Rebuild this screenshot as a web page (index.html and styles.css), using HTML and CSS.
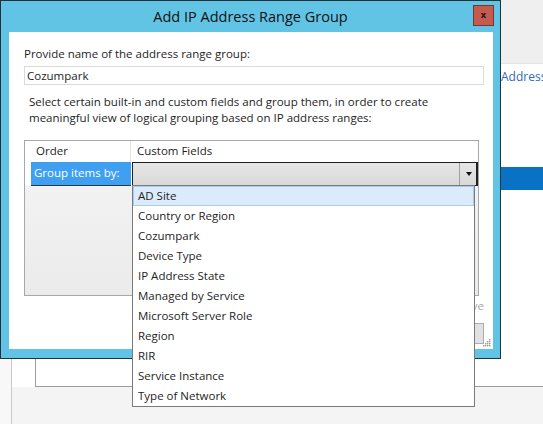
FILE: index.html
```html
<!DOCTYPE html>
<html>
<head>
<meta charset="utf-8">
<link rel="stylesheet" href="styles.css">
</head>
<body>
<div class="desktop">
  <div class="app">
    <div class="app-rail"></div>
    <div class="app-main">
      <div class="app-top">
        <div class="app-gutter"></div>
        <div class="app-panel">
          <div class="app-toolbar"></div>
          <div class="app-link">Addresses</div>
          <div class="app-band"></div>
        </div>
      </div>
      <div class="app-bottom"></div>
    </div>
  </div>

  <div class="dialog">
    <div class="titlebar">
      <span></span>
      <span class="title">Add IP Address Range Group</span>
      <span class="close">x</span>
    </div>
    <div class="content">
      <div class="label">Provide name of the address range group:</div>
      <div class="input">Cozumpark</div>
      <p class="desc">Select certain built-in and custom fields and group them, in order to create meaningful view of logical grouping based on IP address ranges:</p>
      <div class="grid">
        <div class="hcell hcell-order">Order</div>
        <div class="hcell">Custom Fields</div>
        <div class="rcell-order"><div class="sel-cell">Group items by:</div></div>
        <div class="rcell-field">
          <div class="combo">
            <div class="combo-value"></div>
            <div class="combo-btn"><span class="arrow"></span></div>
          </div>
          <ul class="dropdown">
            <li class="opt opt-active">AD Site</li>
            <li class="opt">Country or Region</li>
            <li class="opt">Cozumpark</li>
            <li class="opt">Device Type</li>
            <li class="opt">IP Address State</li>
            <li class="opt">Managed by Service</li>
            <li class="opt">Microsoft Server Role</li>
            <li class="opt">Region</li>
            <li class="opt">RIR</li>
            <li class="opt">Service Instance</li>
            <li class="opt">Type of Network</li>
          </ul>
        </div>
        <div class="body-cell"></div>
      </div>
      <div class="footer-note">Move Up &nbsp; Move Down &nbsp; Remove</div>
      <div class="buttons">
        <span class="btn">OK</span>
        <span class="btn">Cancel</span>
      </div>
      <svg class="grip" width="8" height="8" viewBox="0 0 8 8">
        <g fill="#9a9a9a">
          <rect x="6" y="0" width="1.4" height="1.4"/>
          <rect x="4" y="2" width="1.4" height="1.4"/><rect x="6" y="2" width="1.4" height="1.4"/>
          <rect x="2" y="4" width="1.4" height="1.4"/><rect x="4" y="4" width="1.4" height="1.4"/><rect x="6" y="4" width="1.4" height="1.4"/>
          <rect x="0" y="6" width="1.4" height="1.4"/><rect x="2" y="6" width="1.4" height="1.4"/><rect x="4" y="6" width="1.4" height="1.4"/><rect x="6" y="6" width="1.4" height="1.4"/>
        </g>
      </svg>
    </div>
  </div>
</div>
</body>
</html>
```

FILE: styles.css
```css
* { box-sizing: border-box; }
html, body { margin: 0; padding: 0; }
body {
  width: 543px;
  height: 424px;
  overflow: hidden;
  font-family: "Open Sans", "Noto Sans", sans-serif;
  font-size: 11.5px;
  color: #1e1e1e;
  background: #fff;
}
.desktop { position: relative; width: 543px; height: 424px; overflow: hidden; }

/* background application */
.app { display: flex; height: 424px; }
.app-rail { flex: 0 0 12px; background: #f8f8f8; border-right: 1px solid #c9c9c9; }
.app-main { flex: 1; min-width: 0; display: flex; flex-direction: column; }
.app-top { flex: 0 0 387px; display: flex; background: #fff; }
.app-gutter { flex: 0 0 23px; }
.app-panel {
  flex: 1;
  min-width: 0;
  display: flex;
  flex-direction: column;
  border-left: 1px solid #9c9c9c;
  border-bottom: 1px solid #9c9c9c;
  overflow: hidden;
}
.app-toolbar { flex: 0 0 64px; background: #efefef; border-bottom: 1px solid #e4e4e4; }
.app-link {
  flex: 0 0 103px;
  padding: 4px 0 0 465px;
  white-space: nowrap;
  color: #2f6db5;
  font-size: 12px;
}
.app-band { flex: 0 0 23px; background: #0a72c4; }
.app-bottom { flex: 1; background: #f4f4f4; }

/* dialog window */
.dialog {
  position: absolute;
  left: 0;
  top: 0;
  width: 501px;
  height: 359px;
  border: 1px solid #25313a;
  background: #62c4e4;
  display: flex;
  flex-direction: column;
  padding: 0 7px 9px 8px;
}
.titlebar {
  height: 31px;
  display: grid;
  grid-template-columns: 1fr auto 1fr;
  align-items: start;
  margin: 0 -7px 0 -8px;
}
.title {
  font-size: 14.5px;
  color: #111;
  line-height: 31px;
}
.close {
  justify-self: end;
  margin: 4px 6px 0 0;
  width: 21px;
  height: 21px;
  background: #c75a4e;
  border: 1px solid #6e3a33;
  color: #1a1a1a;
  font-family: "DejaVu Sans", sans-serif;
  font-weight: bold;
  font-size: 9px;
  line-height: 18px;
  text-align: center;
}
.content {
  position: relative;
  flex: 1;
  background: #fff;
  padding: 14px 9px 0 15px;
}
.label { line-height: 16px; }
.input {
  margin-top: 4px;
  height: 19px;
  border: 1px solid #dadada;
  padding-left: 2px;
  line-height: 17px;
}
.desc {
  margin: 9px 0 0 0;
  padding-left: 5px;
  line-height: 16px;
  width: 420px;
}
.grid {
  margin-top: 14px;
  width: 455px;
  height: 156px;
  border: 1px solid #a4a9b0;
  display: grid;
  grid-template-columns: 106px 1fr;
  grid-template-rows: 21px 24px 1fr;
}
.hcell { line-height: 20px; padding-left: 6px; }
.hcell-order { padding-left: 11px; border-right: 1px solid #e4e4e4; }
.rcell-order { padding-left: 6px; }
.sel-cell {
  height: 24px;
  background: #3f9ff0;
  color: #fff;
  line-height: 22px;
  padding-left: 3px;
  border-bottom: 1px solid #2c3440;
}
.rcell-field { position: relative; padding-left: 1px; }
.combo {
  height: 24px;
  display: flex;
  border: 1px solid #1f1f1f;
  border-right-width: 2px;
  background: linear-gradient(#e6e6e6, #d9d9d9);
}
.combo-value { flex: 1; }
.combo-btn {
  width: 17px;
  border-left: 1px solid #a0a0a0;
  display: flex;
  align-items: center;
  justify-content: center;
}
.arrow {
  width: 0;
  height: 0;
  border-left: 3.5px solid transparent;
  border-right: 3.5px solid transparent;
  border-top: 4px solid #111;
  margin-left: 1px;
}
.body-cell {
  grid-column: 1 / 3;
  background: linear-gradient(#f2f2f2, #ebebeb);
}
.dropdown {
  position: absolute;
  left: 1px;
  top: 23px;
  width: 343px;
  margin: 0;
  padding: 0;
  list-style: none;
  background: #fff;
  border: 1px solid #7a7a7a;
  z-index: 5;
}
.opt {
  height: 20px;
  line-height: 20px;
  padding-left: 5px;
  white-space: nowrap;
}
.opt-active {
  background: #dcebfc;
  border: 1px solid #a9cbef;
  line-height: 18px;
  padding-left: 4px;
}
.footer-note {
  margin-top: 2px;
  text-align: right;
  line-height: 16px;
  color: #a8a8a8;
}
.buttons {
  margin-top: 9px;
  display: flex;
  justify-content: flex-end;
  gap: 8px;
}
.btn {
  width: 75px;
  height: 21px;
  background: #e1e1e1;
  border: 1px solid #adadad;
  text-align: center;
  line-height: 19px;
}
.grip { position: absolute; right: 2px; bottom: 2px; }
```
